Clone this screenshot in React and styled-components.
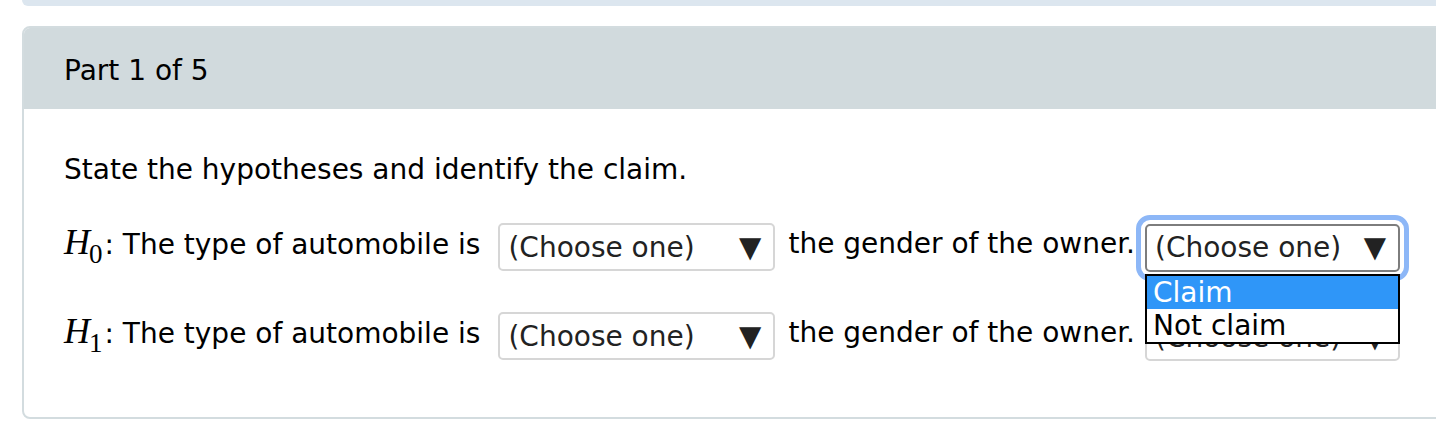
import styled, { createGlobalStyle } from "styled-components";

const GlobalStyle = createGlobalStyle`
body {
  margin: 0;
  background: #fff;
  overflow: hidden;
  font-family: "DejaVu Sans", Verdana, sans-serif;
  color: #000;
}
`

const TopStrip = styled.div`
height: 6px;
margin-left: 22px;
background-color: #dce6ef;
border-bottom-left-radius: 8px;
`

const Card = styled.div`
margin: 20px -40px 0 22px;
border: 2px solid #d3dcdf;
border-radius: 8px;
`

const Header = styled.div`
height: 81px;
box-sizing: border-box;
display: flex;
align-items: center;
padding: 4px 0 0 40px;
background-color: #d1dadd;
border-radius: 6px 6px 0 0;
font-size: 28px;
`

const Body = styled.div`
padding: 44px 40px 57px;
`

const Prompt = styled.p`
margin: 0;
font-size: 28px;
line-height: 34px;
`

const Row = styled.div`
display: flex;
align-items: center;
height: 48px;
margin-top: ${p => p.$top}px;
font-size: 28px;
`

const Label = styled.span`
line-height: 34px;
padding-bottom: 7px;
margin-left: ${p => p.$left || 0}px;
white-space: pre;
`

const MathH = styled.span`
font-family: "Liberation Serif", "Times New Roman", serif;
font-style: italic;
font-size: 36px;
`

const Sub = styled.sub`
font-family: "Liberation Serif", "Times New Roman", serif;
font-size: 27px;
vertical-align: -9px;
line-height: 0;
margin: 0 2px 0 -1px;
`

const SelectWrap = styled.div`
position: relative;
margin-left: ${p => p.$left}px;
margin-top: ${p => p.$shift || 0}px;
`

const Select = styled.div`
box-sizing: border-box;
width: ${p => p.$width}px;
height: 48px;
display: flex;
align-items: center;
justify-content: space-between;
padding: 0 12px 0 8px;
border: 2px solid ${p => (p.$focused ? "#7d7d7d" : "#d6d6d6")};
border-radius: 5px;
background: #fff;
color: #222;
font-size: 28px;
outline: ${p => (p.$focused ? "5px solid #8db7f7" : "none")};
outline-offset: 4px;
`

const Arrow = styled.span`
font-size: 29px;
color: #222;
line-height: 1;
`

const Menu = styled.div`
position: absolute;
top: 50px;
left: 0;
width: 100%;
box-sizing: border-box;
border: 2px solid #000;
background: #fff;
z-index: 2;
`

const Option = styled.div`
height: 33px;
line-height: 33px;
padding-left: 6px;
font-size: 28px;
color: ${p => (p.$active ? "#fff" : "#000")};
background: ${p => (p.$active ? "#2f96f8" : "#fff")};
`

function Dropdown({ width, left, shift, focused, open }) {
    return <SelectWrap $left={left} $shift={shift}>
        <Select $width={width} $focused={focused}>
            <span>(Choose one)</span>
            <Arrow>▼</Arrow>
        </Select>
        {open && <Menu>
            <Option $active>Claim</Option>
            <Option>Not claim</Option>
        </Menu>}
    </SelectWrap>
}

function Hypothesis({ index, top, focused, open, shift }) {
    return <Row $top={top}>
        <Label><MathH>H</MathH><Sub>{index}</Sub>: The type of automobile is</Label>
        <Dropdown width={277} left={18} />
        <Label $left={13}>the gender of the owner.</Label>
        <Dropdown width={255} left={10} focused={focused} open={open} shift={shift} />
    </Row>
}

export default function App() {
    return <>
        <GlobalStyle />
        <TopStrip />
        <Card>
            <Header>Part 1 of 5</Header>
            <Body>
                <Prompt>State the hypotheses and identify the claim.</Prompt>
                <Hypothesis index={0} top={36} focused open shift={1} />
                <Hypothesis index={1} top={41} shift={2} />
            </Body>
        </Card>
    </>
}
